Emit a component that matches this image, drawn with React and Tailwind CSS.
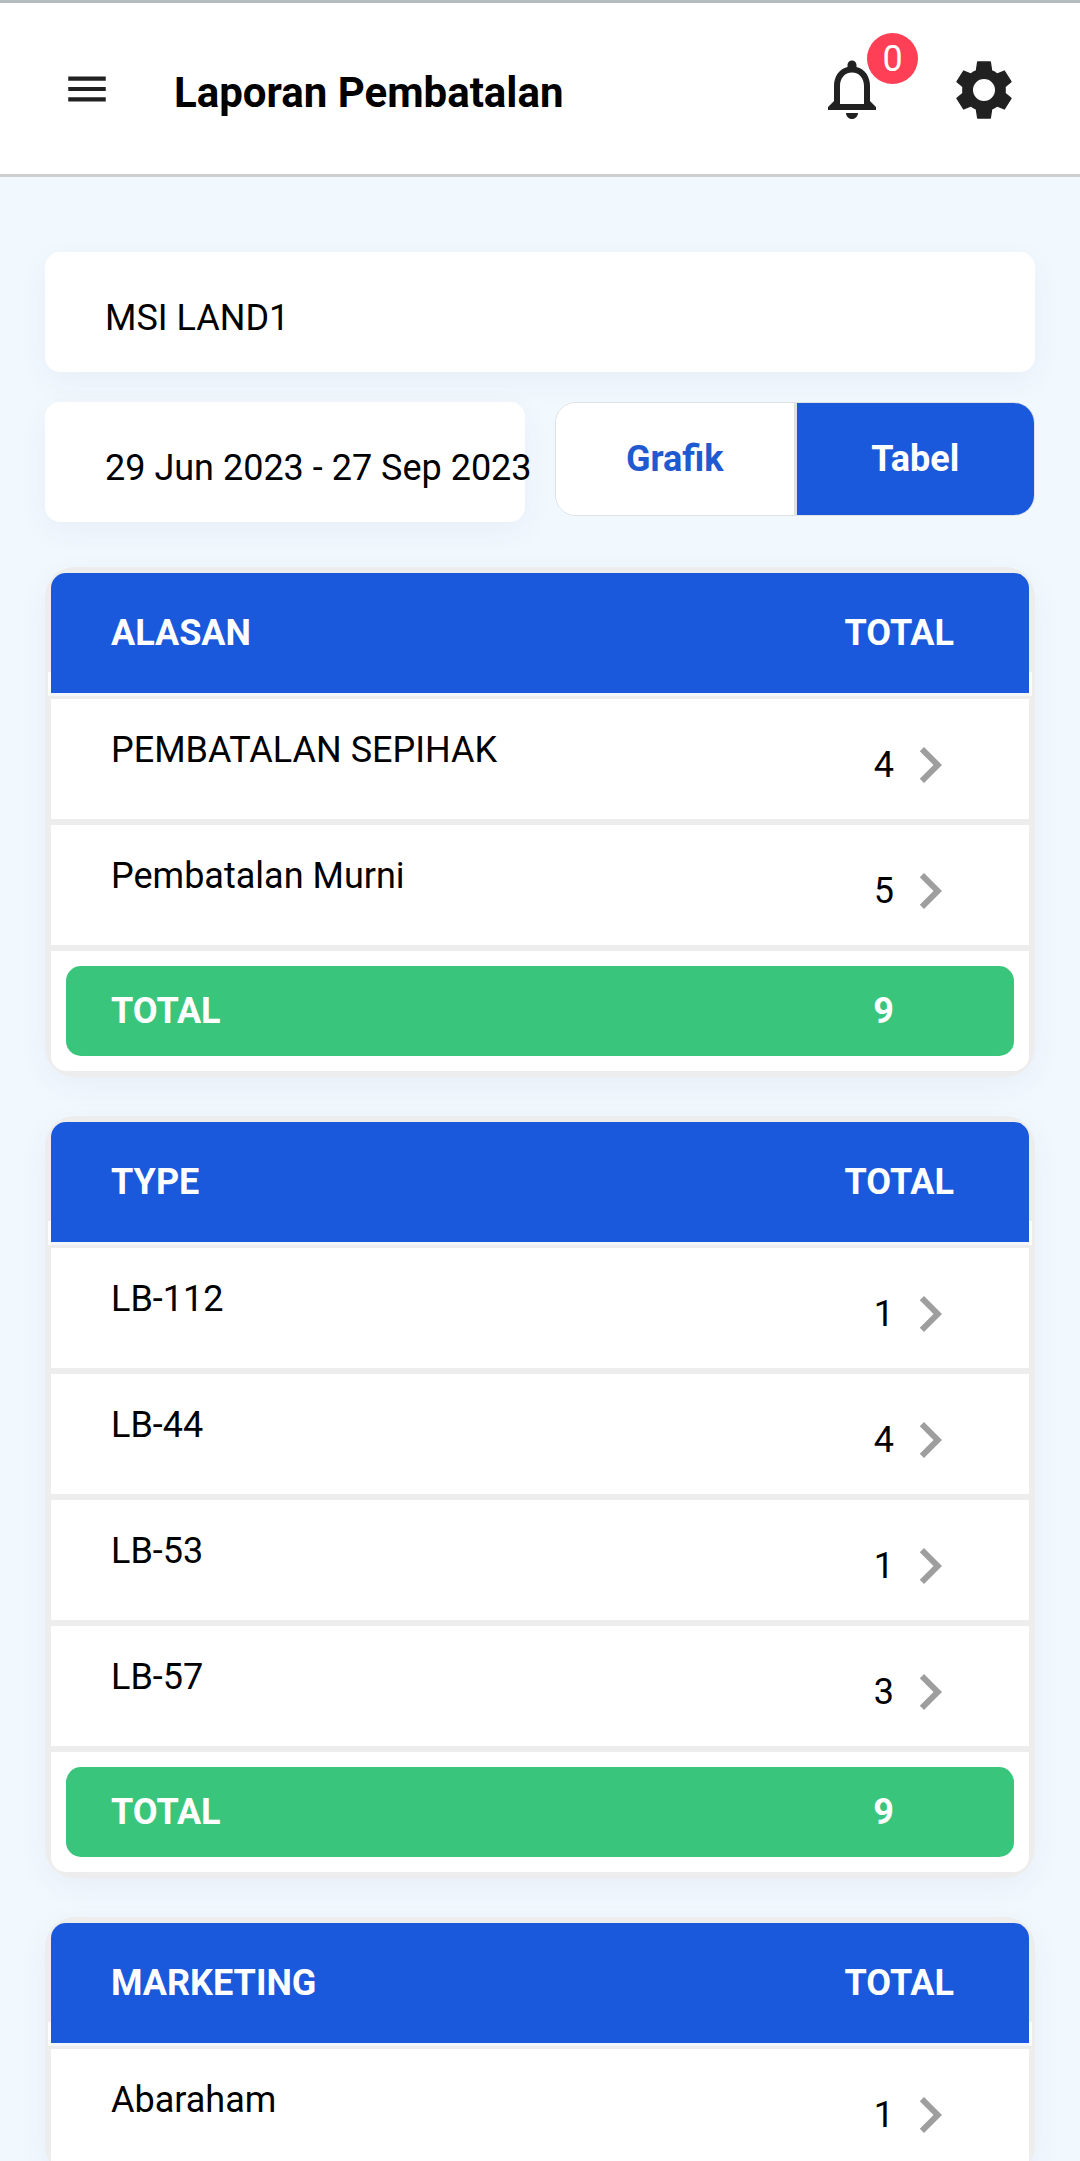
import React, { useState } from "react";

const sections = [
  {
    title: "ALASAN",
    rows: [
      { name: "PEMBATALAN SEPIHAK", total: 4 },
      { name: "Pembatalan Murni", total: 5 },
    ],
    total: 9,
  },
  {
    title: "TYPE",
    rows: [
      { name: "LB-112", total: 1 },
      { name: "LB-44", total: 4 },
      { name: "LB-53", total: 1 },
      { name: "LB-57", total: 3 },
    ],
    total: 9,
  },
  {
    title: "MARKETING",
    rows: [{ name: "Abaraham", total: 1 }],
  },
];

function Icon({ className, d }) {
  return (
    <svg viewBox="0 0 24 24" fill="currentColor" aria-hidden="true" className={className}>
      <path d={d} />
    </svg>
  );
}

const MENU = "M3 18h18v-2H3v2zm0-5h18v-2H3v2zm0-7v2h18V6H3z";
const BELL =
  "M12 22c1.1 0 2-.9 2-2h-4c0 1.1.9 2 2 2zm6-6v-5c0-3.07-1.63-5.64-4.5-6.32V4c0-.83-.67-1.5-1.5-1.5s-1.5.67-1.5 1.5v.68C7.64 5.36 6 7.92 6 11v5l-2 2v1h16v-1l-2-2zm-2 1H8v-6c0-2.48 1.51-4.5 4-4.5s4 2.02 4 4.5v6z";
const CHEVRON = "M8.59 16.59 13.17 12 8.59 7.41 10 6l6 6-6 6z";

// Six-toothed gear with a round hole.
function GearIcon({ className }) {
  return (
    <svg viewBox="24 12 216 216" aria-hidden="true" className={className}>
      <path
        fill="currentColor"
        fillRule="evenodd"
        stroke="currentColor"
        strokeWidth="4"
        strokeLinejoin="round"
        d="M113 39H151L155 66Q164 69 171 75L193 66L213 98L195 113Q196 123 195 133L213 148L193 180L171 171Q164 177 155 180L151 207H113L109 180Q100 177 93 171L71 180L51 148L69 133Q68 123 69 113L51 98L71 66L93 75Q100 69 109 66ZM132 88A35 35 0 1 0 132 158A35 35 0 1 0 132 88Z"
      />
    </svg>
  );
}

function Header() {
  return (
    <header className="relative z-10 flex shrink-0 items-center border-y-[3px] border-t-[#b4bcbf] border-b-[#cecfd0] bg-white pt-[50px] pr-[60px] pb-[49px] pl-[62px] text-[#212121]">
      <button type="button" aria-label="Menu">
        <Icon d={MENU} className="size-[50px]" />
      </button>
      <h1 className="ml-[62px] flex-1 pt-2 text-[42px] leading-[48px] font-bold text-black">
        Laporan Pembatalan
      </h1>
      <div className="flex gap-[60px]">
        <button type="button" aria-label="Notifikasi" className="relative">
          <Icon d={BELL} className="size-[72px]" />
          <span className="absolute -top-5 left-[51px] flex size-[51px] items-center justify-center rounded-full bg-[#ff3f56] text-[36px] leading-[42px] text-white">
            0
          </span>
        </button>
        <button type="button" aria-label="Pengaturan">
          <GearIcon className="size-[72px]" />
        </button>
      </div>
    </header>
  );
}

function Picker({ children }) {
  return (
    <button
      type="button"
      className="w-full rounded-[15px] bg-white px-[60px] pt-[45px] pb-[33px] text-left whitespace-nowrap shadow-[0_9px_30px_rgba(80,30,80,0.055)]"
    >
      {children}
    </button>
  );
}

function ViewToggle() {
  const [view, setView] = useState("Tabel");
  return (
    <div className="relative flex overflow-hidden rounded-[21px] border border-[#dfe1e4] bg-white">
      {["Grafik", "Tabel"].map((name) => (
        <button
          key={name}
          type="button"
          aria-pressed={view === name}
          onClick={() => setView(name)}
          className={`flex-1 border-[#dfe1e4] py-[35px] text-center font-bold first:border-r-[3px] ${
            view === name ? "bg-[#1a59dc] text-white" : "bg-white text-[#1f5ad0]"
          }`}
        >
          {name}
        </button>
      ))}
    </div>
  );
}

function SummaryTable({ title, rows, total }) {
  return (
    <section className="rounded-[30px] bg-[#ededed] p-[6px] shadow-[0_9px_30px_rgba(80,30,80,0.055)]">
      <table className="w-full border-separate border-spacing-0">
        <thead>
          <tr className="text-white">
            <th
              scope="col"
              className="relative rounded-tl-[15px] bg-[#1a59dc] py-[39px] pl-[60px] text-left font-bold before:absolute before:-bottom-[3px] before:-left-[3px] before:h-6 before:w-[3px] before:bg-white"
            >
              {title}
            </th>
            <th
              scope="col"
              className="relative rounded-tr-[15px] bg-[#1a59dc] py-[39px] pr-[75px] text-right font-bold before:absolute before:-right-[3px] before:-bottom-[3px] before:h-6 before:w-[3px] before:bg-white"
            >
              TOTAL
            </th>
          </tr>
          <tr aria-hidden="true">
            <td colSpan={2} className="h-[3px] bg-[#f3f6fb] p-0" />
          </tr>
        </thead>
        <tbody>
          {rows.map((row, i) => {
            const edge = i === 0 ? "border-t-[3px]" : "border-t-[6px]";
            return (
              <tr key={row.name} className="bg-white">
                <td className={`border-[#ededed] pt-[30px] pb-[48px] pl-[60px] ${edge}`}>
                  {row.name}
                </td>
                <td className={`border-[#ededed] pt-[30px] pr-[63px] pb-[18px] ${edge}`}>
                  <button type="button" className="ml-auto flex items-center">
                    {row.total}
                    <Icon d={CHEVRON} className="size-[72px] text-[#9e9e9e]" />
                  </button>
                </td>
              </tr>
            );
          })}
        </tbody>
        {total !== undefined && (
          <tfoot>
            <tr className="text-left font-bold text-white">
              <th
                scope="row"
                className="rounded-bl-[15px] border-t-[6px] border-[#ededed] bg-white py-[15px] pl-[15px] font-bold"
              >
                <div className="rounded-l-[15px] bg-[#39c67c] py-6 pl-[45px]">TOTAL</div>
              </th>
              <td className="rounded-br-[15px] border-t-[6px] border-[#ededed] bg-white py-[15px] pr-[15px]">
                <div className="rounded-r-[15px] bg-[#39c67c] py-6 pr-[120px] text-right">
                  {total}
                </div>
              </td>
            </tr>
          </tfoot>
        )}
      </table>
    </section>
  );
}

export default function App() {
  return (
    <div className="flex h-screen flex-col bg-[#f1f9ff] font-[Roboto,sans-serif] text-[36px] leading-[42px] text-black">
      <Header />
      <main className="flex-1 overflow-y-auto px-[45px] pt-[75px] [scrollbar-width:none]">
        <div className="grid gap-[30px]">
          <Picker>MSI LAND1</Picker>
          <div className="grid grid-cols-2 items-start gap-[30px]">
            <Picker>29 Jun 2023 - 27 Sep 2023</Picker>
            <ViewToggle />
          </div>
        </div>
        <div className="mt-[45px] flex flex-col gap-[39px]">
          {sections.map((section) => (
            <SummaryTable key={section.title} {...section} />
          ))}
        </div>
      </main>
    </div>
  );
}
